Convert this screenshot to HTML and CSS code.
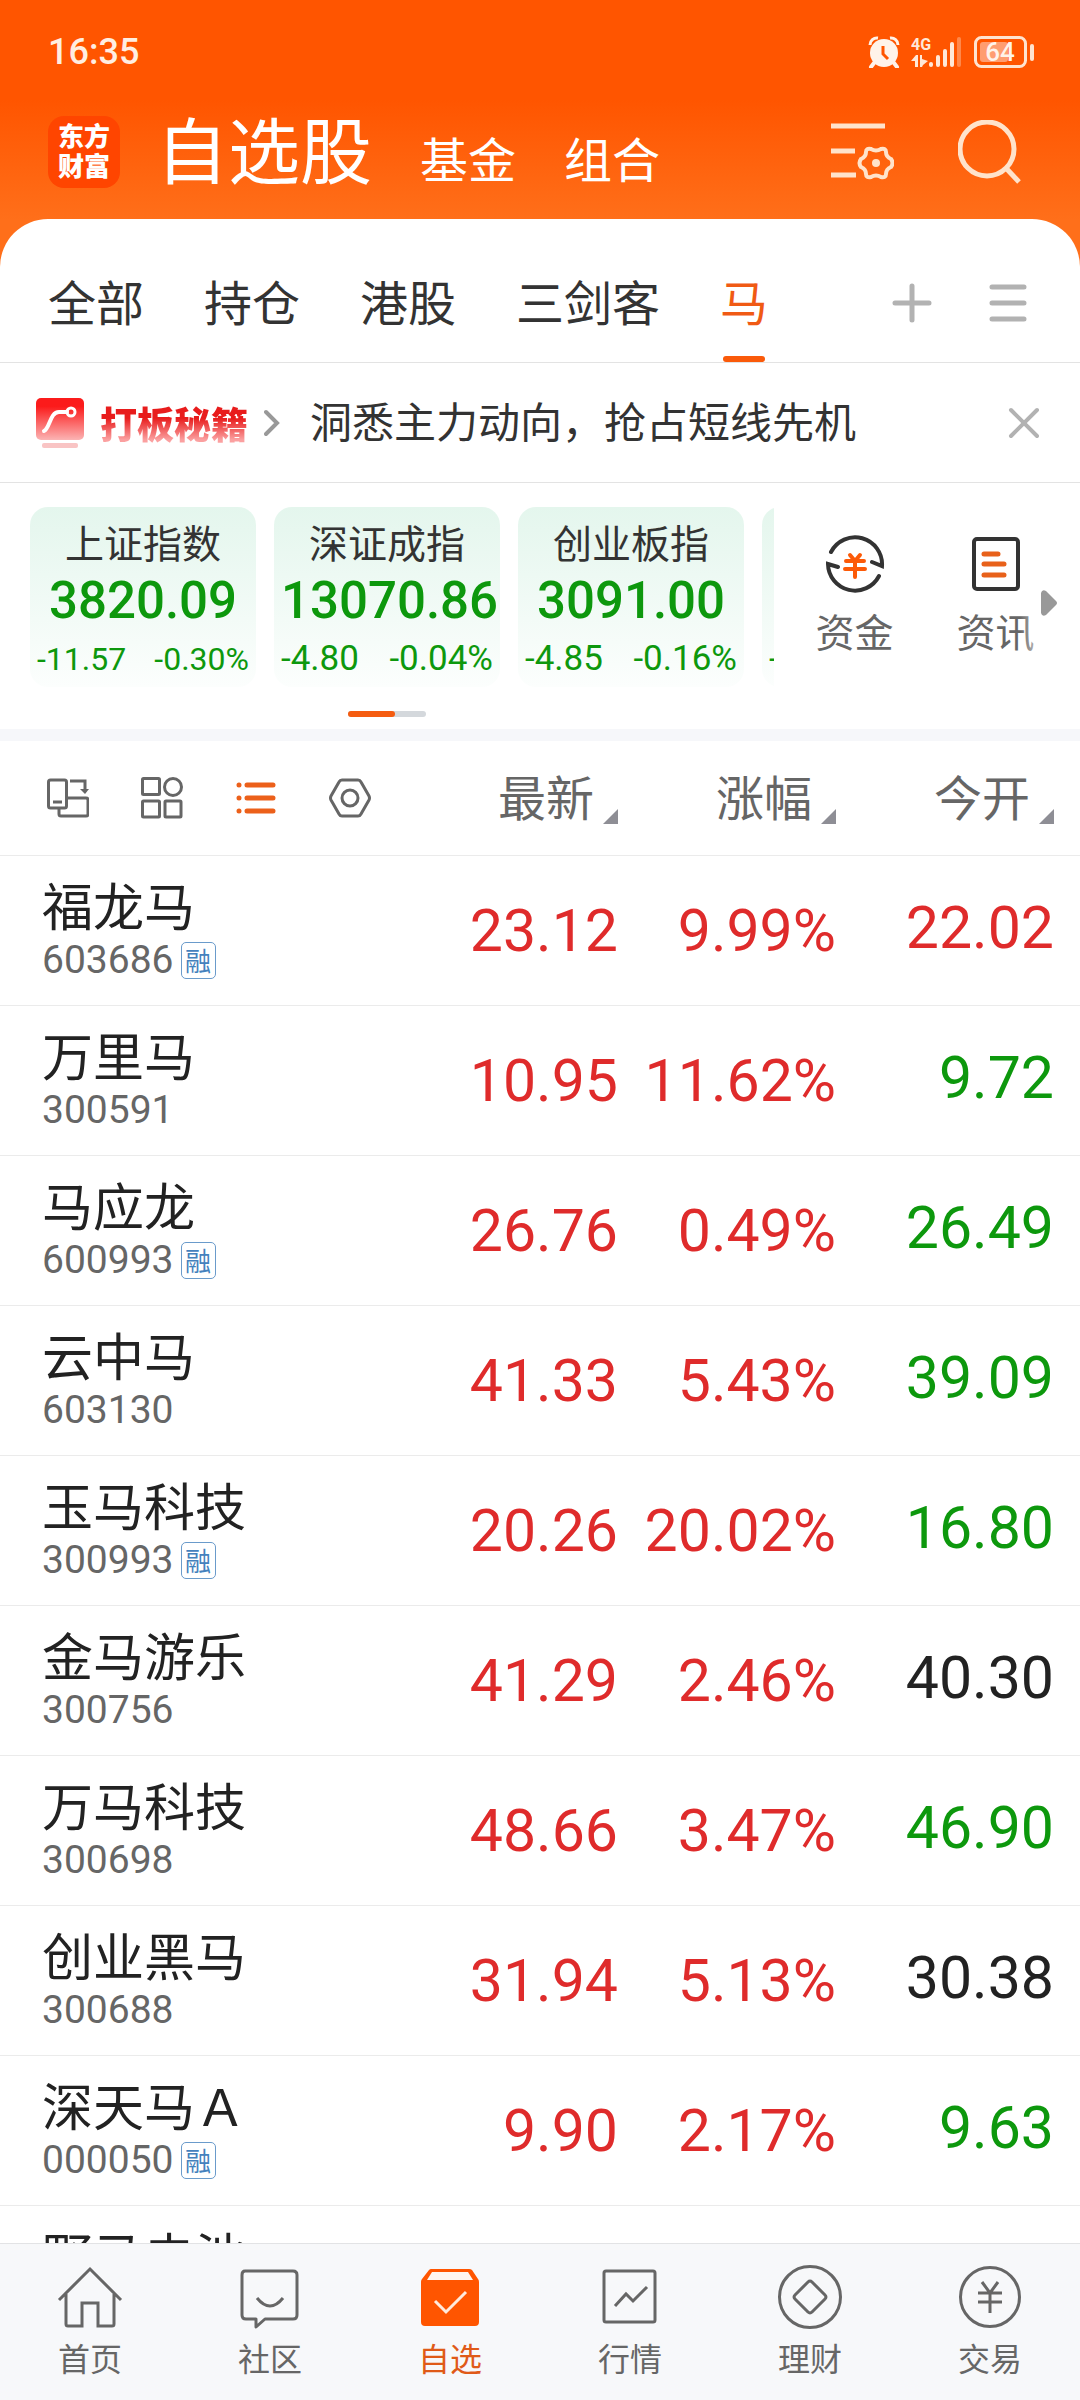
FILE: index.html
```
<!DOCTYPE html>
<html lang="zh-CN">
<head>
    <meta charset="UTF-8">
    <meta name="viewport" content="width=device-width, initial-scale=1.0">
    <title>自选股</title>
    <link rel="stylesheet" href="styles.css">
</head>
<body>
<div class="app">
    <div class="status-bar">
        <span class="clock">16:35</span>
        <div class="status-icons">
            <svg width="32" height="32" viewBox="0 0 32 32" aria-hidden="true">
                <circle cx="16" cy="17" r="14" fill="#fff3ea"/>
                <path d="M2 9a7 7 0 0 1 8-7M30 9a7 7 0 0 0-8-7" fill="none" stroke="#fff3ea" stroke-width="3"/>
                <path d="M6 27l-3 4M26 27l3 4" stroke="#fff3ea" stroke-width="4" stroke-linecap="round"/>
                <path d="M15 10v8l5 5" fill="none" stroke="#ff5500" stroke-width="3"/>
            </svg>
            <svg class="signal" width="52" height="32" viewBox="0 0 52 32" fill="#ffe8d8" aria-hidden="true">
                <text x="0" y="14" class="signal-text">4G</text>
                <path d="M0 25l5-6h2v12H4v-6zM9 19h2v4l6 2-5 4-1 2H9z"/>
                <rect x="18" y="26" width="4" height="5" rx="2"/>
                <rect x="25" y="19" width="4" height="12" rx="2"/>
                <rect x="32" y="13" width="4" height="18" rx="2"/>
                <rect x="39" y="6" width="4" height="25" rx="2"/>
                <rect x="46" y="1" width="4" height="30" rx="2" opacity=".35"/>
            </svg>
            <svg width="60" height="32" viewBox="0 0 60 32" aria-hidden="true">
                <rect x="1.500" y="1.500" width="50" height="29" rx="6" fill="none" stroke="#ffe3cf" stroke-width="3"/>
                <rect x="6" y="6" width="28" height="20" rx="3" fill="#ff9d70"/>
                <rect x="56" y="8" width="4" height="17" rx="2" fill="#ffe3cf"/>
                <text x="26" y="25" text-anchor="middle" class="battery-text">64</text>
            </svg>
        </div>
    </div>

    <header class="title-bar">
        <a href="#" class="logo">东方<br>财富</a>
        <nav class="titles">
            <a href="#" class="title-main">自选股</a>
            <a href="#">基金</a>
            <a href="#">组合</a>
        </nav>
        <button class="icon-btn" aria-label="设置">
            <svg width="64" height="64" viewBox="0 0 64 64" fill="none" stroke="#ffe3cb" stroke-width="5">
                <path d="M1 6h54M1 31h24M1 55h25"/>
                <path d="M41 29q5 3 10 0q5-1 5 3q0 5 5 7q3 4 0 8q-5 2-5 7q0 4-5 3q-5-3-10 0q-5 1-5-3q0-5-5-7q-3-4 0-8q5-2 5-7q0-4 5-3z" stroke-width="4"/>
                <circle cx="46" cy="43" r="4" fill="#ffe3cb" stroke="none"/>
            </svg>
        </button>
        <button class="icon-btn" aria-label="搜索">
            <svg width="64" height="64" viewBox="0 0 64 64" fill="none" stroke="#ffe3cb" stroke-width="5">
                <circle cx="29" cy="29" r="27"/>
                <path d="M47 47l14 15"/>
            </svg>
        </button>
    </header>

    <main class="sheet">
        <nav class="groups">
            <a href="#">全部</a>
            <a href="#">持仓</a>
            <a href="#">港股</a>
            <a href="#">三剑客</a>
            <a href="#" class="active">马</a>
            <div class="group-tools">
                <button class="icon-btn" aria-label="添加">
                    <svg width="40" height="40" viewBox="0 0 40 40" stroke="#b2b2b2" stroke-width="5" stroke-linecap="round"><path d="M3 20h34M20 3v34"/></svg>
                </button>
                <button class="icon-btn" aria-label="菜单">
                    <svg width="40" height="40" viewBox="0 0 40 40" stroke="#b2b2b2" stroke-width="5" stroke-linecap="round"><path d="M4 4h32M4 20h32M4 36h32"/></svg>
                </button>
            </div>
        </nav>

        <section class="banner">
            <svg width="48" height="50" viewBox="0 0 48 50" aria-hidden="true">
                <defs>
                    <linearGradient id="red-fade" x1="0" y1="0" x2="0" y2="1">
                        <stop offset="0.200" stop-color="#fb1b1b"/>
                        <stop offset="1" stop-color="#fbb4b4"/>
                    </linearGradient>
                </defs>
                <rect width="48" height="42" rx="5" fill="url(#red-fade)"/>
                <rect x="6" y="45" width="36" height="5" rx="2" fill="#f9c4c4"/>
                <path d="M8 33c6-3 6-19 15-19h8" fill="none" stroke="#fff" stroke-width="4" stroke-linecap="round"/>
                <circle cx="35" cy="14" r="4" fill="none" stroke="#fff" stroke-width="3"/>
            </svg>
            <strong class="banner-tag">打板秘籍</strong>
            <svg width="16" height="28" viewBox="0 0 16 28" fill="none" stroke="#999" stroke-width="4" stroke-linecap="round" aria-hidden="true"><path d="M2 3l11 11L2 25"/></svg>
            <a href="#" class="banner-text">洞悉主力动向，抢占短线先机</a>
            <button class="icon-btn" aria-label="关闭">
                <svg width="32" height="32" viewBox="0 0 32 32" stroke="#b2b2b2" stroke-width="4" stroke-linecap="round"><path d="M3 3l26 26M29 3L3 29"/></svg>
            </button>
        </section>

        <section class="market">
            <div class="indices">
                <div class="index-strip">
                    <div class="index-card">
                        <div class="index-name">上证指数</div>
                        <div class="index-value">3820.09</div>
                        <div class="index-change small"><span>-11.57</span><span>-0.30%</span></div>
                    </div>
                    <div class="index-card">
                        <div class="index-name">深证成指</div>
                        <div class="index-value">13070.86</div>
                        <div class="index-change"><span>-4.80</span><span>-0.04%</span></div>
                    </div>
                    <div class="index-card">
                        <div class="index-name">创业板指</div>
                        <div class="index-value">3091.00</div>
                        <div class="index-change"><span>-4.85</span><span>-0.16%</span></div>
                    </div>
                    <div class="index-card">
                        <div class="index-change last"><span>-</span></div>
                    </div>
                </div>
                <div class="pager"><span></span></div>
            </div>
            <div class="shortcuts">
                <a href="#">
                    <svg width="60" height="60" viewBox="0 0 60 60" fill="none" stroke="#333" stroke-width="4" stroke-linecap="round" aria-hidden="true">
                        <path d="M6 18a27 27 0 0 1 51 14l-10-4M54 42A27 27 0 0 1 3 30l10 3"/>
                        <path d="M25 21l5 6 5-6M21 27h18M20 35h20M30 27v16" stroke="#fc5a08"/>
                    </svg>
                    <span>资金</span>
                </a>
                <a href="#">
                    <svg width="60" height="60" viewBox="0 0 60 60" fill="none" stroke="#333" stroke-width="4" stroke-linecap="round" aria-hidden="true">
                        <rect x="8" y="5" width="44" height="50" rx="3"/>
                        <path d="M18 20h14M18 30h20M18 41h20" stroke="#e8611a" stroke-width="5"/>
                    </svg>
                    <span>资讯</span>
                </a>
                <div class="more">
                    <svg width="16" height="26" viewBox="0 0 16 26" aria-hidden="true"><path d="M0 3q1-4 5-2l10 10q2 2 0 4L5 25q-4 2-5-2z" fill="#999"/></svg>
                </div>
            </div>
        </section>

        <section class="quotes">
            <table>
                <thead>
                    <tr>
                        <th>
                            <div class="view-tools">
                                <button class="icon-btn" aria-label="横屏">
                                    <svg width="42" height="42" viewBox="0 0 42 42" fill="none" stroke="#666" stroke-width="3">
                                        <rect x="1.500" y="3" width="18" height="28" rx="2"/>
                                        <path d="M6 25h9M20 21h19q2 0 2 2v14q0 2-2 2H14q-2 0-2-2v-6M23 4h15v10"/>
                                        <path d="M33 12h9l-4 5z" fill="#666" stroke="none"/>
                                    </svg>
                                </button>
                                <button class="icon-btn" aria-label="宫格">
                                    <svg width="42" height="42" viewBox="0 0 42 42" fill="none" stroke="#666" stroke-width="3">
                                        <rect x="1.500" y="1.500" width="17" height="16" rx="1"/>
                                        <circle cx="32" cy="10" r="8.500"/>
                                        <rect x="1.500" y="24" width="17" height="16" rx="1"/>
                                        <rect x="24" y="24" width="16" height="16" rx="1"/>
                                    </svg>
                                </button>
                                <button class="icon-btn" aria-label="列表">
                                    <svg width="42" height="42" viewBox="0 0 42 42" fill="none" stroke="#ec601a" stroke-width="5" stroke-linecap="round">
                                        <path d="M4 8h0M12 8h26M4 21h0M12 21h26M4 34h0M12 34h26"/>
                                    </svg>
                                </button>
                                <button class="icon-btn" aria-label="显示设置">
                                    <svg width="42" height="42" viewBox="0 0 42 42" fill="none" stroke="#666" stroke-width="3">
                                        <path d="M13 3h16q2 0 3 2l8 14q1 2 0 4l-8 14q-1 2-3 2H13q-2 0-3-2L2 23q-1-2 0-4l8-14q1-2 3-2z"/>
                                        <circle cx="21" cy="21" r="8"/>
                                    </svg>
                                </button>
                            </div>
                        </th>
                        <th><button class="sort">最新</button></th>
                        <th><button class="sort">涨幅</button></th>
                        <th><button class="sort">今开</button></th>
                    </tr>
                </thead>
                <tbody>
                    <tr>
                        <td><div class="name">福龙马</div><div class="code">603686<span class="badge">融</span></div></td>
                        <td class="up">23.12</td><td class="up">9.99%</td><td class="up">22.02</td>
                    </tr>
                    <tr>
                        <td><div class="name">万里马</div><div class="code">300591</div></td>
                        <td class="up">10.95</td><td class="up">11.62%</td><td class="down">9.72</td>
                    </tr>
                    <tr>
                        <td><div class="name">马应龙</div><div class="code">600993<span class="badge">融</span></div></td>
                        <td class="up">26.76</td><td class="up">0.49%</td><td class="down">26.49</td>
                    </tr>
                    <tr>
                        <td><div class="name">云中马</div><div class="code">603130</div></td>
                        <td class="up">41.33</td><td class="up">5.43%</td><td class="down">39.09</td>
                    </tr>
                    <tr>
                        <td><div class="name">玉马科技</div><div class="code">300993<span class="badge">融</span></div></td>
                        <td class="up">20.26</td><td class="up">20.02%</td><td class="down">16.80</td>
                    </tr>
                    <tr>
                        <td><div class="name">金马游乐</div><div class="code">300756</div></td>
                        <td class="up">41.29</td><td class="up">2.46%</td><td>40.30</td>
                    </tr>
                    <tr>
                        <td><div class="name">万马科技</div><div class="code">300698</div></td>
                        <td class="up">48.66</td><td class="up">3.47%</td><td class="down">46.90</td>
                    </tr>
                    <tr>
                        <td><div class="name">创业黑马</div><div class="code">300688</div></td>
                        <td class="up">31.94</td><td class="up">5.13%</td><td>30.38</td>
                    </tr>
                    <tr>
                        <td><div class="name">深天马Ａ</div><div class="code">000050<span class="badge">融</span></div></td>
                        <td class="up">9.90</td><td class="up">2.17%</td><td class="down">9.63</td>
                    </tr>
                    <tr>
                        <td><div class="name">野马电池</div></td>
                        <td></td><td></td><td></td>
                    </tr>
                </tbody>
            </table>
        </section>
    </main>

    <nav class="tab-bar">
        <a href="#">
            <svg width="66" height="66" viewBox="0 0 66 66" fill="none" stroke="#666" stroke-width="3" aria-hidden="true">
                <path d="M2 35L33 4l31 31M9 29v30q0 2 2 2h14V38h16v23h14q2 0 2-2V29"/>
            </svg>
            <span>首页</span>
        </a>
        <a href="#">
            <svg width="66" height="66" viewBox="0 0 66 66" fill="none" stroke="#666" stroke-width="3" stroke-linejoin="round" aria-hidden="true">
                <path d="M8 6h48q4 0 4 4v40q0 4-4 4H28l-9 8v-8H9q-4 0-4-4V10q0-4 3-4z"/>
                <path d="M20 33q13 16 26 0"/>
            </svg>
            <span>社区</span>
        </a>
        <a href="#" class="active">
            <svg width="66" height="66" viewBox="0 0 66 66" aria-hidden="true">
                <path d="M14 4h38q2 0 3 1l6 9q1 1 1 3v40q0 4-4 4H8q-4 0-4-4V17q0-2 1-3l7-9q1-1 2-1z" fill="#ff5500"/>
                <path d="M15 7h36l5 8H10z" fill="#fff6f0"/>
                <path d="M18 36l11 11 20-20" fill="none" stroke="#ffeadc" stroke-width="3"/>
            </svg>
            <span>自选</span>
        </a>
        <a href="#">
            <svg width="66" height="66" viewBox="0 0 66 66" fill="none" stroke="#666" stroke-width="3" aria-hidden="true">
                <rect x="7" y="6" width="51" height="51" rx="2"/>
                <path d="M18 41l11-12 7 7 14-14"/>
            </svg>
            <span>行情</span>
        </a>
        <a href="#">
            <svg width="66" height="66" viewBox="0 0 66 66" fill="none" stroke="#666" stroke-width="3" aria-hidden="true">
                <circle cx="33" cy="32" r="30.500"/>
                <path d="M31 17q2-2 4 0l13 13q2 2 0 4L35 47q-2 2-4 0L18 34q-2-2 0-4z"/>
            </svg>
            <span>理财</span>
        </a>
        <a href="#">
            <svg width="66" height="66" viewBox="0 0 66 66" fill="none" stroke="#666" stroke-width="3" aria-hidden="true">
                <circle cx="33" cy="32" r="29.500"/>
                <path d="M25 17l8 11 8-11M21 28h24M21 37h24M33 28v20"/>
            </svg>
            <span>交易</span>
        </a>
    </nav>
</div>
</body>
</html>
```

FILE: styles.css
```
* {
    box-sizing: border-box;
}
body {
    margin: 0;
    font-family: "Noto Sans CJK SC", sans-serif;
    color: #333;
}
a {
    color: inherit;
    text-decoration: none;
}
button {
    padding: 0;
    border: 0;
    background: none;
    font: inherit;
    color: inherit;
    cursor: pointer;
}
svg {
    display: block;
    flex: none;
}
.app {
    display: flex;
    flex-direction: column;
    height: 100vh;
    background: linear-gradient(#ff5500 100px, #ff6f1a 220px);
}

/* status bar */
.status-bar {
    display: flex;
    justify-content: space-between;
    align-items: center;
    height: 104px;
    padding: 0 46px 0 48px;
}
.clock {
    font-family: Roboto, sans-serif;
    font-size: 36px;
    font-weight: 500;
    color: #ffeee2;
}
.status-icons {
    display: flex;
    gap: 11px;
}
.signal-text {
    font: 700 16px Roboto, sans-serif;
}
.battery-text {
    font: 500 26px Roboto, sans-serif;
    fill: #fff3ea;
}

/* title bar */
.title-bar {
    display: flex;
    align-items: center;
    gap: 36px;
    height: 115px;
    padding: 0 58px 20px 48px;
    color: #fff;
}
.logo {
    width: 72px;
    height: 72px;
    padding-top: 4px;
    border-radius: 16px;
    background: #ff4500;
    font-size: 26px;
    font-weight: 900;
    line-height: 30px;
    text-align: center;
}
.titles {
    display: flex;
    flex: 1;
    align-items: baseline;
    gap: 48px;
    font-size: 48px;
    line-height: 72px;
    white-space: nowrap;
}
.title-main {
    font-size: 72px;
}
.title-bar .icon-btn + .icon-btn {
    margin-left: 28px;
}

/* white sheet */
.sheet {
    display: flex;
    flex-direction: column;
    flex: 1;
    min-height: 0;
    overflow: hidden;
    border-radius: 48px 48px 0 0;
    background: #fff;
}
.groups {
    display: flex;
    flex: none;
    align-items: stretch;
    gap: 60px;
    height: 144px;
    padding: 0 52px 0 48px;
    border-bottom: 1px solid #e3e3e3;
    font-size: 48px;
    line-height: 162px;
    white-space: nowrap;
}
.groups .active {
    position: relative;
    color: #f05a14;
}
.groups .active::after {
    content: "";
    position: absolute;
    bottom: 0;
    left: 3px;
    right: 3px;
    height: 6px;
    border-radius: 3px;
    background: #fa5a0a;
}
.group-tools {
    display: flex;
    align-items: center;
    gap: 56px;
    margin-left: auto;
    padding-top: 24px;
}
.banner {
    display: flex;
    flex: none;
    align-items: center;
    gap: 16px;
    height: 120px;
    padding: 0 40px 0 36px;
    border-bottom: 1px solid #e3e3e3;
}
.banner-tag {
    background: linear-gradient(#e81c1c 40%, #fba0a0 85%);
    -webkit-background-clip: text;
    background-clip: text;
    color: transparent;
    font-size: 37px;
    font-weight: 900;
    line-height: 48px;
}
.banner-text {
    flex: 1;
    margin-left: 14px;
    padding-bottom: 6px;
    font-size: 42px;
    line-height: 48px;
    white-space: nowrap;
}

/* index cards */
.market {
    display: flex;
    flex: none;
    height: 258px;
    border-bottom: 12px solid #f6f7fa;
}
.indices {
    flex: 1;
    min-width: 0;
    padding-top: 24px;
}
.index-strip {
    display: flex;
    gap: 18px;
    padding-left: 30px;
    overflow: hidden;
}
.index-card {
    flex: none;
    width: 226px;
    height: 180px;
    padding: 10px 7px 0;
    border-radius: 18px;
    background: linear-gradient(#e4f6ed, #fcfefd);
    color: #0d980d;
    text-align: center;
}
.index-name {
    font-size: 39px;
    line-height: 48px;
    color: #333;
}
.index-value {
    font-family: Roboto, sans-serif;
    font-size: 51px;
    font-weight: 500;
    line-height: 72px;
}
.index-change {
    display: flex;
    justify-content: space-between;
    font-family: Roboto, sans-serif;
    font-size: 35px;
    line-height: 44px;
}
.index-change.small {
    font-size: 32px;
}
.index-change.last {
    padding-top: 120px;
}
.pager {
    width: 78px;
    height: 6px;
    margin: 24px auto 0;
    border-radius: 3px;
    background: #d4d8dc;
}
.pager span {
    display: block;
    width: 60%;
    height: 100%;
    border-radius: 3px;
    background: #f55c10;
}
.shortcuts {
    position: relative;
    display: flex;
    flex: none;
    width: 306px;
    padding: 51px 14px 0 10px;
    font-size: 39px;
    line-height: 48px;
    color: #666;
}
.shortcuts a {
    display: flex;
    flex: 1;
    flex-direction: column;
    align-items: center;
    gap: 12px;
}
.more {
    position: absolute;
    top: 0;
    right: 0;
    width: 60px;
    height: 100%;
    padding: 107px 0 0 21px;
    background: linear-gradient(to right, rgba(255, 255, 255, 0), #fff 30px);
}

/* quote list */
.quotes {
    flex: 1;
    min-height: 0;
    overflow: hidden;
}
table {
    width: 100%;
    table-layout: fixed;
    border-spacing: 0;
}
th, td {
    padding: 0;
    border-bottom: 1px solid #ebebeb;
    font-weight: 400;
    text-align: right;
}
th {
    width: 218px;
    height: 115px;
    padding-bottom: 6px;
    font-size: 48px;
    line-height: 64px;
    color: #666;
}
th:first-child {
    width: auto;
    padding: 0 0 0 47px;
}
th:last-child {
    width: 244px;
    padding-right: 26px;
}
.view-tools {
    display: flex;
    gap: 52px;
}
.sort::after {
    content: "";
    display: inline-block;
    width: 15px;
    height: 15px;
    margin-left: 9px;
    background: #8e8e95;
    clip-path: polygon(100% 0, 100% 100%, 0 100%);
    vertical-align: -8px;
}
td {
    height: 150px;
    font-family: Roboto, sans-serif;
    font-size: 59px;
    line-height: 72px;
    color: #222;
}
td:first-child {
    padding: 18px 0 0 42px;
    text-align: left;
    vertical-align: top;
}
td:last-child {
    padding: 0 26px 6px 0;
}
.name {
    font-family: "Noto Sans CJK SC", sans-serif;
    font-size: 51px;
    line-height: 60px;
    white-space: nowrap;
}
.code {
    display: flex;
    align-items: center;
    gap: 7px;
    font-size: 39px;
    line-height: 52px;
    color: #666;
}
.badge {
    width: 35px;
    height: 37px;
    border: 1px solid #6a9bcb;
    border-radius: 5px;
    font-family: "Noto Sans CJK SC", sans-serif;
    font-size: 26px;
    line-height: 34px;
    text-align: center;
    color: #4481bd;
}
td.up {
    color: #df2b2b;
}
td.down {
    color: #0d980d;
}

/* bottom tabs */
.tab-bar {
    display: flex;
    flex: none;
    height: 157px;
    border-top: 1px solid #e2e3e5;
    background: #f7f8fa;
    font-size: 32px;
    line-height: 40px;
    color: #666;
}
.tab-bar a {
    display: flex;
    flex: 1;
    flex-direction: column;
    align-items: center;
    gap: 6px;
    padding-top: 21px;
}
.tab-bar .active {
    color: #e05a18;
}
```
